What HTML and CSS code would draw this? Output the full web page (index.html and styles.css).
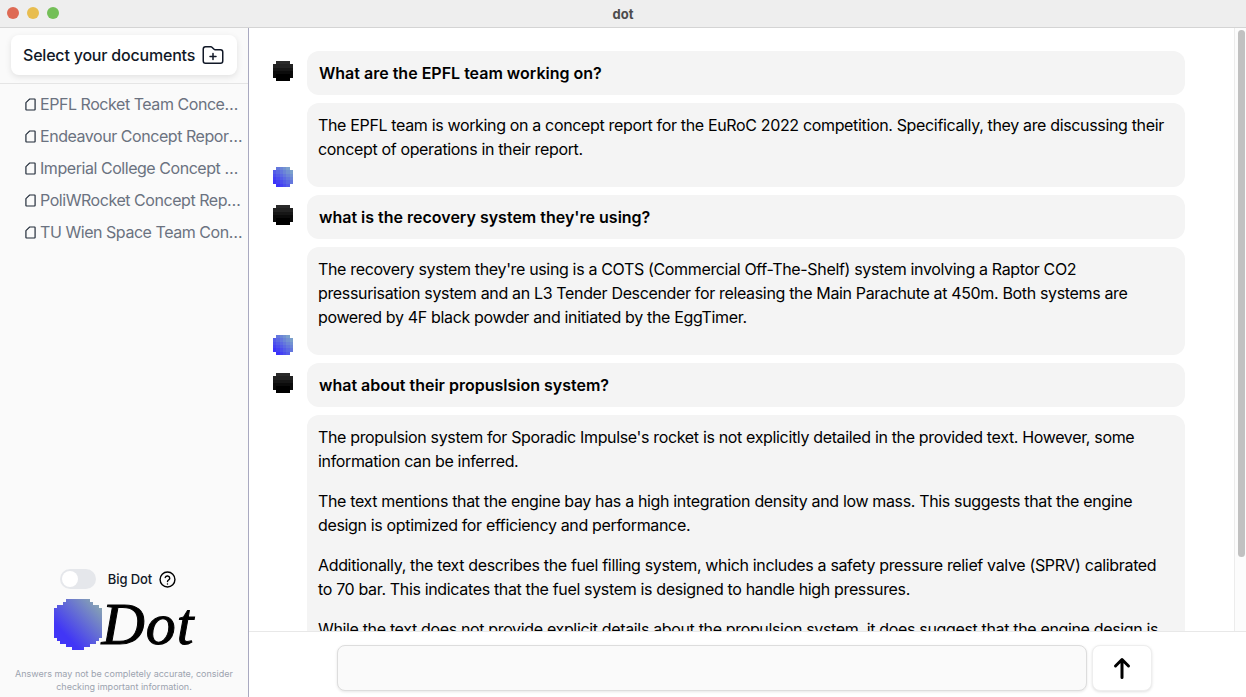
FILE: index.html
```html
<!DOCTYPE html>
<html lang="en">
<head>
    <meta charset="UTF-8">
    <title>dot</title>
    <link rel="stylesheet" href="styles.css">
</head>
<body>
    <svg class="defs" width="0" height="0">
        <defs>
            <linearGradient id="blue-big" x1="0.1" y1="0.9" x2="0.9" y2="0.1">
                <stop offset="0.2" stop-color="#4136f6"/>
                <stop offset="1" stop-color="#86a2b4"/>
            </linearGradient>
            <symbol id="dot-black" viewBox="0 0 6 6" shape-rendering="crispEdges">
                <path fill="#0b0b0b" d="M1 0h4v1h1v4h-1v1h-4v-1h-1v-4h1z"/>
                <rect x="1" y="0" width="4" height="1" fill="#2a2a2a"/>
                <rect x="0" y="1" width="6" height="1" fill="#222222"/>
                <rect x="0" y="2" width="6" height="1" fill="#161616"/>
                <rect x="1" y="4" width="4" height="2" fill="#000000"/>
            </symbol>
            <symbol id="dot-blue" viewBox="0 0 6 6" shape-rendering="crispEdges">
                <path fill="#3c33fa" d="M0 4h1v1h-1zM1 5h1v1h-1z"/>
                <path fill="#4440f4" d="M0 3h1v1h-1zM1 4h1v1h-1zM2 5h1v1h-1z"/>
                <path fill="#4c4eee" d="M0 2h1v1h-1zM1 3h1v1h-1zM2 4h1v1h-1zM3 5h1v1h-1z"/>
                <path fill="#545ce8" d="M0 1h1v1h-1zM1 2h1v1h-1zM2 3h1v1h-1zM3 4h1v1h-1zM4 5h1v1h-1z"/>
                <path fill="#5c69e3" d="M1 1h1v1h-1zM2 2h1v1h-1zM3 3h1v1h-1zM4 4h1v1h-1z"/>
                <path fill="#6477dd" d="M1 0h1v1h-1zM2 1h1v1h-1zM3 2h1v1h-1zM4 3h1v1h-1zM5 4h1v1h-1z"/>
                <path fill="#6c85d7" d="M2 0h1v1h-1zM3 1h1v1h-1zM4 2h1v1h-1zM5 3h1v1h-1z"/>
                <path fill="#7392d2" d="M3 0h1v1h-1zM4 1h1v1h-1zM5 2h1v1h-1z"/>
                <path fill="#7ba0cc" d="M4 0h1v1h-1zM5 1h1v1h-1z"/>
            </symbol>
        </defs>
    </svg>

    <header class="titlebar">
        <div class="lights">
            <span class="light light-red"></span>
            <span class="light light-yellow"></span>
            <span class="light light-green"></span>
        </div>
        <span class="title">dot</span>
    </header>

    <div class="app">
        <aside class="sidebar">
            <div class="sidebar-top">
                <button class="select-btn" type="button">
                    Select your documents
                    <svg class="folder-icon" viewBox="0 0 24 24" fill="none" stroke="currentColor" stroke-width="1.5" stroke-linecap="round" stroke-linejoin="round">
                        <path d="M12 10.5v6m3-3H9M13.06 6.31l-2.12-2.12A1.5 1.5 0 0 0 9.88 3.75H4.5A2.25 2.25 0 0 0 2.25 6v12a2.25 2.25 0 0 0 2.25 2.25h15A2.25 2.25 0 0 0 21.75 18V9a2.25 2.25 0 0 0-2.25-2.25h-5.38a1.5 1.5 0 0 1-1.06-.44z"/>
                    </svg>
                </button>
            </div>

            <ul class="doc-list">
                <li class="doc">
                    <svg class="doc-icon" viewBox="0 0 12 14" fill="none" stroke="currentColor" stroke-width="1.3" stroke-linejoin="miter"><path d="M5 1H10.4a.6.6 0 0 1 .6.6V12.4a.6.6 0 0 1-.6.6H1.6a.6.6 0 0 1-.6-.6V5z"/></svg>
                    <span class="doc-name">EPFL Rocket Team Concept Report.pdf</span>
                </li>
                <li class="doc">
                    <svg class="doc-icon" viewBox="0 0 12 14" fill="none" stroke="currentColor" stroke-width="1.3" stroke-linejoin="miter"><path d="M5 1H10.4a.6.6 0 0 1 .6.6V12.4a.6.6 0 0 1-.6.6H1.6a.6.6 0 0 1-.6-.6V5z"/></svg>
                    <span class="doc-name">Endeavour Concept Report.pdf</span>
                </li>
                <li class="doc">
                    <svg class="doc-icon" viewBox="0 0 12 14" fill="none" stroke="currentColor" stroke-width="1.3" stroke-linejoin="miter"><path d="M5 1H10.4a.6.6 0 0 1 .6.6V12.4a.6.6 0 0 1-.6.6H1.6a.6.6 0 0 1-.6-.6V5z"/></svg>
                    <span class="doc-name">Imperial College Concept Report.pdf</span>
                </li>
                <li class="doc">
                    <svg class="doc-icon" viewBox="0 0 12 14" fill="none" stroke="currentColor" stroke-width="1.3" stroke-linejoin="miter"><path d="M5 1H10.4a.6.6 0 0 1 .6.6V12.4a.6.6 0 0 1-.6.6H1.6a.6.6 0 0 1-.6-.6V5z"/></svg>
                    <span class="doc-name">PoliWRocket Concept Report.pdf</span>
                </li>
                <li class="doc">
                    <svg class="doc-icon" viewBox="0 0 12 14" fill="none" stroke="currentColor" stroke-width="1.3" stroke-linejoin="miter"><path d="M5 1H10.4a.6.6 0 0 1 .6.6V12.4a.6.6 0 0 1-.6.6H1.6a.6.6 0 0 1-.6-.6V5z"/></svg>
                    <span class="doc-name">TU Wien Space Team Concept Report.pdf</span>
                </li>
            </ul>

            <div class="sidebar-bottom">
                <div class="big-dot">
                    <span class="toggle"><span class="toggle-knob"></span></span>
                    <span class="big-dot-label">Big Dot</span>
                    <svg class="help-icon" viewBox="0 0 24 24" fill="none" stroke="currentColor" stroke-width="2" stroke-linecap="round" stroke-linejoin="round">
                        <circle cx="12" cy="12" r="10.5"/>
                        <path d="M8.8 9.2a3.3 3.3 0 0 1 6.4 1c0 2.2-3.2 2.6-3.2 4.6"/>
                        <path d="M12 18.2v.1"/>
                    </svg>
                </div>
                <div class="logo">
                    <svg class="logo-dot" viewBox="0 0 16 17" shape-rendering="crispEdges">
                        <path fill="url(#blue-big)" d="M4 0H12V1H13V2H15V3H16V13H15V14H14V15H12V16H10V17H6V16H4V15H2V14H1V13H0V3H1V2H3V1H4Z"/>
                    </svg>
                    <span class="logo-text">Dot</span>
                </div>
                <p class="disclaimer">Answers may not be completely accurate, consider checking important information.</p>
            </div>
        </aside>

        <main class="main">
            <div class="chat">
                <div class="message">
                    <svg class="avatar avatar-user"><use href="#dot-black"/></svg>
                    <div class="bubble bubble-user">What are the EPFL team working on?</div>
                </div>
                <div class="message message-bot">
                    <svg class="avatar"><use href="#dot-blue"/></svg>
                    <div class="bubble bubble-bot">
                        <p>The EPFL team is working on a concept report for the EuRoC 2022 competition. Specifically, they are discussing their concept of operations in their report.</p>
                    </div>
                </div>
                <div class="message">
                    <svg class="avatar avatar-user"><use href="#dot-black"/></svg>
                    <div class="bubble bubble-user">what is the recovery system they're using?</div>
                </div>
                <div class="message message-bot">
                    <svg class="avatar"><use href="#dot-blue"/></svg>
                    <div class="bubble bubble-bot">
                        <p>The recovery system they're using is a COTS (Commercial Off-The-Shelf) system involving a Raptor CO2 pressurisation system and an L3 Tender Descender for releasing the Main Parachute at 450m. Both systems are powered by 4F black powder and initiated by the EggTimer.</p>
                    </div>
                </div>
                <div class="message">
                    <svg class="avatar avatar-user"><use href="#dot-black"/></svg>
                    <div class="bubble bubble-user">what about their propuslsion system?</div>
                </div>
                <div class="message message-bot">
                    <svg class="avatar"><use href="#dot-blue"/></svg>
                    <div class="bubble bubble-bot">
                        <p>The propulsion system for Sporadic Impulse's rocket is not explicitly detailed in the provided text. However, some information can be inferred.</p>
                        <p>The text mentions that the engine bay has a high integration density and low mass. This suggests that the engine design is optimized for efficiency and performance.</p>
                        <p>Additionally, the text describes the fuel filling system, which includes a safety pressure relief valve (SPRV) calibrated to 70 bar. This indicates that the fuel system is designed to handle high pressures.</p>
                        <p>While the text does not provide explicit details about the propulsion system, it does suggest that the engine design is focused on efficiency and performance.</p>
                    </div>
                </div>
            </div>
            <div class="scroll-track"><div class="scroll-thumb"></div></div>

            <form class="composer">
                <input class="composer-input" type="text">
                <button class="send-btn" type="button">
                    <svg class="send-icon" viewBox="0 0 24 24" fill="none" stroke="currentColor" stroke-width="3" stroke-linecap="round" stroke-linejoin="round">
                        <path d="M12 21.5V3.5M5.5 10l6.5-6.5 6.5 6.5"/>
                    </svg>
                </button>
            </form>
        </main>
    </div>
</body>
</html>
```

FILE: styles.css
```css
* {
    box-sizing: border-box;
}

html,
body {
    height: 100%;
}

body {
    margin: 0;
    display: flex;
    flex-direction: column;
    overflow: hidden;
    font-family: Inter, "Liberation Sans", sans-serif;
    color: #000000;
    background-color: #ffffff;
}

.defs {
    position: absolute;
}

/* window title bar */
.titlebar {
    height: 28px;
    flex: none;
    display: flex;
    align-items: center;
    justify-content: center;
    position: relative;
    background-color: #eeeeee;
    border-bottom: 1px solid #d4d4d4;
}

.lights {
    position: absolute;
    left: 7px;
    top: 7px;
    display: flex;
    gap: 8px;
}

.light {
    width: 12px;
    height: 12px;
    border-radius: 50%;
}

.light-red {
    background-color: #de6a54;
}

.light-yellow {
    background-color: #e8bd4f;
}

.light-green {
    background-color: #74bf58;
}

.title {
    font-size: 13px;
    font-weight: 700;
    color: #4c4c4c;
}

.app {
    flex: 1;
    display: flex;
    min-height: 0;
}

/* sidebar */
.sidebar {
    width: 249px;
    flex: none;
    display: flex;
    flex-direction: column;
    background-color: #fafafa;
    border-right: 1px solid #a9a9c0;
}

.sidebar-top {
    height: 56px;
    padding: 7px 11px 0;
    border-bottom: 1px solid #e5e5e5;
}

.select-btn {
    width: 226px;
    height: 40px;
    display: flex;
    align-items: center;
    justify-content: space-between;
    padding: 0 12px 0 12px;
    border: none;
    border-radius: 8px;
    background-color: #ffffff;
    box-shadow: 0 2px 6px rgba(0, 0, 0, 0.1);
    font-family: inherit;
    font-size: 16px;
    font-weight: 500;
    letter-spacing: -0.2px;
    color: #111827;
}

.folder-icon {
    width: 24px;
    height: 24px;
}

.doc-list {
    list-style: none;
    margin: 4px 0 0;
    padding: 0;
}

.doc {
    height: 32px;
    display: flex;
    align-items: center;
    gap: 4px;
    padding: 0 5px 0 25px;
    color: #1f2937;
}

.doc-icon {
    width: 11px;
    height: 13px;
    flex: none;
}

.doc-name {
    overflow: hidden;
    white-space: nowrap;
    text-overflow: ellipsis;
    font-size: 16px;
    letter-spacing: -0.45px;
    color: #6b7280;
}

.sidebar-bottom {
    margin-top: auto;
    display: flex;
    flex-direction: column;
    align-items: center;
    padding-bottom: 4px;
}

.big-dot {
    display: flex;
    align-items: center;
    height: 20px;
    margin-right: 12px;
}

.toggle {
    width: 36px;
    height: 20px;
    padding: 2px;
    border-radius: 10px;
    background-color: #e5e7eb;
}

.toggle-knob {
    display: block;
    width: 16px;
    height: 16px;
    border-radius: 50%;
    background-color: #ffffff;
}

.big-dot-label {
    margin-left: 12px;
    font-size: 13px;
    font-weight: 500;
    letter-spacing: -0.1px;
    color: #111827;
}

.help-icon {
    width: 17px;
    height: 17px;
    margin-left: 7px;
}

.logo {
    display: flex;
    align-items: center;
    height: 52px;
    margin-top: 9px;
}

.logo-dot {
    width: 48px;
    height: 52px;
}

.logo-text {
    font-family: "Liberation Serif", serif;
    font-style: italic;
    font-size: 60px;
    line-height: 52px;
    letter-spacing: 1px;
    -webkit-text-stroke: 1px #000000;
    color: #000000;
}

.disclaimer {
    width: 232px;
    margin: 17px 0 0;
    text-align: center;
    font-size: 9px;
    line-height: 13px;
    color: #9ca3af;
}

/* chat */
.main {
    flex: 1;
    min-width: 0;
    display: flex;
    flex-direction: column;
    position: relative;
}

.chat {
    flex: 1;
    min-height: 0;
    overflow: hidden;
    padding: 23px 61px 0 24px;
    display: flex;
    flex-direction: column;
    gap: 8px;
}

.message {
    display: flex;
    flex: none;
    align-items: flex-start;
    gap: 14px;
}

.message-bot {
    align-items: flex-end;
}

.avatar {
    width: 20px;
    height: 20px;
    flex: none;
}

.avatar-user {
    margin-top: 10px;
}

.bubble {
    flex: 1;
    min-width: 0;
    border-radius: 12px;
    background-color: #f4f4f4;
    font-size: 16px;
    line-height: 24px;
}

.bubble-user {
    height: 44px;
    padding: 10px 12px;
    font-weight: 600;
}

.bubble-bot {
    padding: 10px 11px 26px;
    letter-spacing: -0.345px;
}

.bubble-bot p {
    margin: 0 0 16px;
}

.bubble-bot p:last-child {
    margin-bottom: 0;
}

.scroll-track {
    position: absolute;
    top: 0;
    right: 0;
    bottom: 66px;
    width: 12px;
    padding: 2px 1px 0 3px;
    background-color: #fcfcfc;
    border-left: 1px solid #ececec;
}

.scroll-thumb {
    height: 527px;
    border-radius: 4px;
    background-color: #c1c1c1;
}

.composer {
    height: 66px;
    flex: none;
    display: flex;
    gap: 5px;
    padding: 13px 0 0 88px;
    background-color: #ffffff;
    border-top: 1px solid #e8e8e8;
    position: relative;
}

.composer-input {
    width: 750px;
    height: 46px;
    border: 1px solid #dddddd;
    border-radius: 8px;
    background-color: #fafafa;
    box-shadow: 0 1px 3px rgba(0, 0, 0, 0.1);
}

.send-btn {
    width: 60px;
    height: 46px;
    display: flex;
    align-items: center;
    justify-content: center;
    padding: 0;
    border: 1px solid #eeeeee;
    border-radius: 8px;
    background-color: #ffffff;
    box-shadow: 0 1px 3px rgba(0, 0, 0, 0.12);
    color: #000000;
}

.send-icon {
    width: 24px;
    height: 24px;
}
```
